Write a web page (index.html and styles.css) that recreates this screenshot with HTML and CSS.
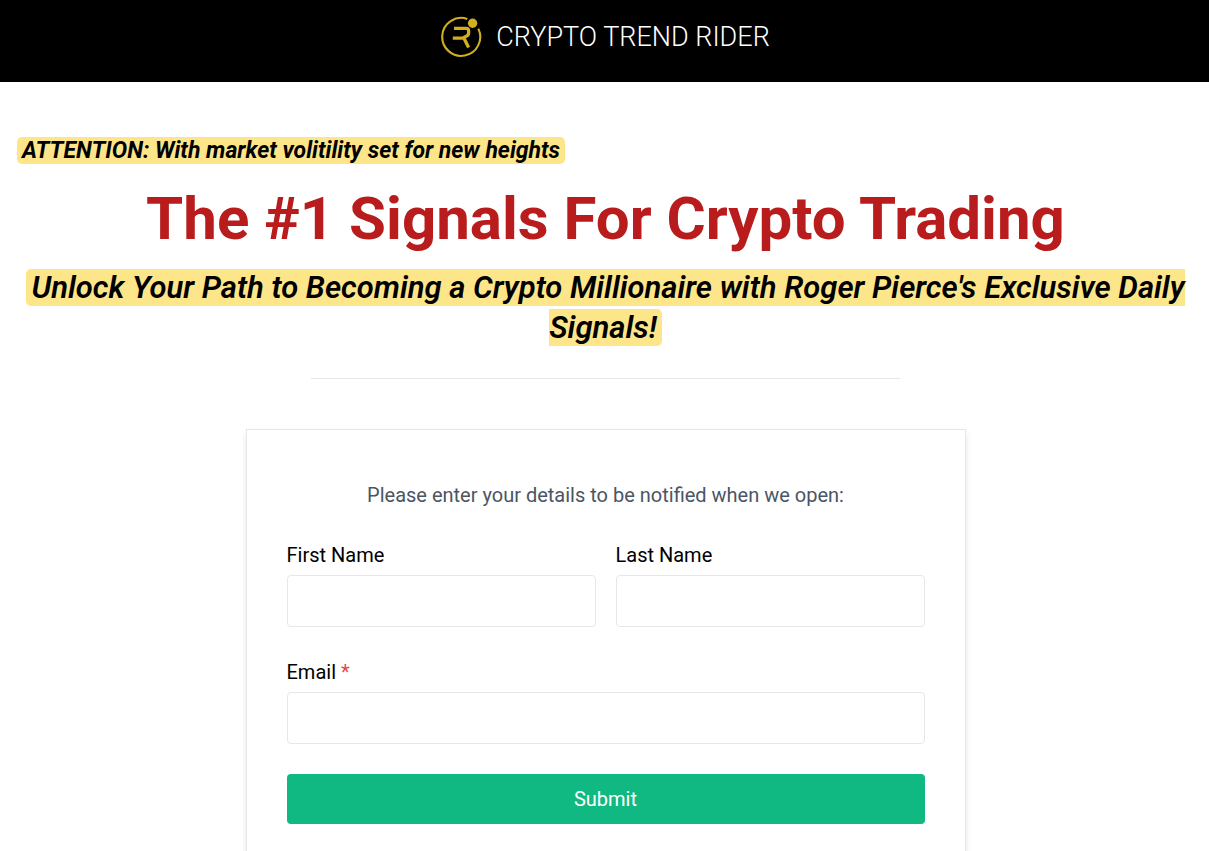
FILE: index.html
```html
<!DOCTYPE html>
<html lang="en">
<head>
<meta charset="utf-8">
<meta name="viewport" content="width=device-width, initial-scale=1">
<title>Crypto Trend Rider</title>
<link rel="stylesheet" href="styles.css">
</head>
<body>
<header class="site-header">
  <svg class="logo-mark" viewBox="0 0 42 42" aria-hidden="true">
    <path d="M26.3 2.9A19 19 0 1 0 37.3 12.6" fill="none" stroke="#d0b01c" stroke-width="2.1"/>
    <circle cx="31.6" cy="7.3" r="4.7" fill="#d0b01c"/>
    <path d="M13 12.3H25.2Q27.6 12.3 27.6 14.6V17Q27.6 19.4 25.2 20.2L21.5 22.2H11.8M20.5 22.2H23L27.6 31.6" fill="none" stroke="#d0b01c" stroke-width="3.3"/>
  </svg>
  <span class="logo-name">CRYPTO TREND RIDER</span>
</header>
<main class="page">
  <section class="intro">
    <p class="attention"><mark class="highlight">ATTENTION: With market volitility set for new heights</mark></p>
    <h1 class="headline">The #1 Signals For Crypto Trading</h1>
    <h2 class="subhead"><mark class="highlight">Unlock Your Path to Becoming a Crypto Millionaire with Roger Pierce's Exclusive Daily Signals!</mark></h2>
  </section>
  <hr class="divider">
  <form class="card">
    <p class="card-text">Please enter your details to be notified when we open:</p>
    <div class="name-row">
      <div class="field">
        <label for="first-name">First Name</label>
        <input id="first-name" type="text">
      </div>
      <div class="field">
        <label for="last-name">Last Name</label>
        <input id="last-name" type="text">
      </div>
    </div>
    <div class="field">
      <label for="email">Email <span class="required">*</span></label>
      <input id="email" type="email" required>
    </div>
    <button class="submit" type="submit">Submit</button>
  </form>
</main>
</body>
</html>
```

FILE: styles.css
```css
* {
  box-sizing: border-box;
}

body {
  margin: 0;
  background: #fff;
  color: #000;
  font-family: Roboto, sans-serif;
  font-size: 20px;
  line-height: 30px;
}

.site-header {
  display: flex;
  align-items: center;
  justify-content: center;
  gap: 13px;
  padding: 16px 15px 24px 17px;
  background: #000;
}

.logo-mark {
  width: 42px;
  height: 42px;
}

.logo-name {
  color: #fff;
  font-size: 27px;
  font-weight: 300;
}

.page {
  padding: 53px 15px 40px 17px;
}

.attention,
.headline,
.subhead {
  margin: 0;
}

.attention {
  font-size: 23px;
  line-height: 32px;
  font-style: italic;
  font-weight: 700;
}

.headline {
  margin-top: 14px;
  color: #b91c1c;
  font-size: 60px;
  line-height: 75px;
  font-weight: 700;
  text-align: center;
}

.subhead {
  margin-top: 12px;
  font-size: 31px;
  line-height: 40px;
  font-style: italic;
  font-weight: 600;
  text-align: center;
}

.highlight {
  padding: 0 5px;
  border-radius: 5px;
  background: #fde68a;
  color: inherit;
}

.divider {
  width: 50%;
  margin: 30px auto 50px;
  border: 0;
  border-top: 1px solid #e5e7eb;
}

.card {
  display: flex;
  flex-direction: column;
  gap: 30px;
  max-width: 720px;
  margin: 0 auto;
  padding: 50px 40px;
  border: 1px solid #e5e7eb;
  box-shadow: 0 4px 6px rgba(0, 0, 0, 0.1);
}

.card-text {
  margin: 0;
  color: #4b5563;
  text-align: center;
}

.name-row {
  display: grid;
  grid-template-columns: 1fr 1fr;
  gap: 20px;
}

.field {
  display: flex;
  flex-direction: column;
  gap: 5px;
}

.field input {
  width: 100%;
  height: 52px;
  padding: 10px 12px;
  border: 1px solid #e5e7eb;
  border-radius: 4px;
  background: #fff;
  font: inherit;
}

.required {
  color: #ef4444;
}

.submit {
  padding: 10px;
  border: 0;
  border-radius: 4px;
  background: #10b981;
  color: #fff;
  font: inherit;
}
```
